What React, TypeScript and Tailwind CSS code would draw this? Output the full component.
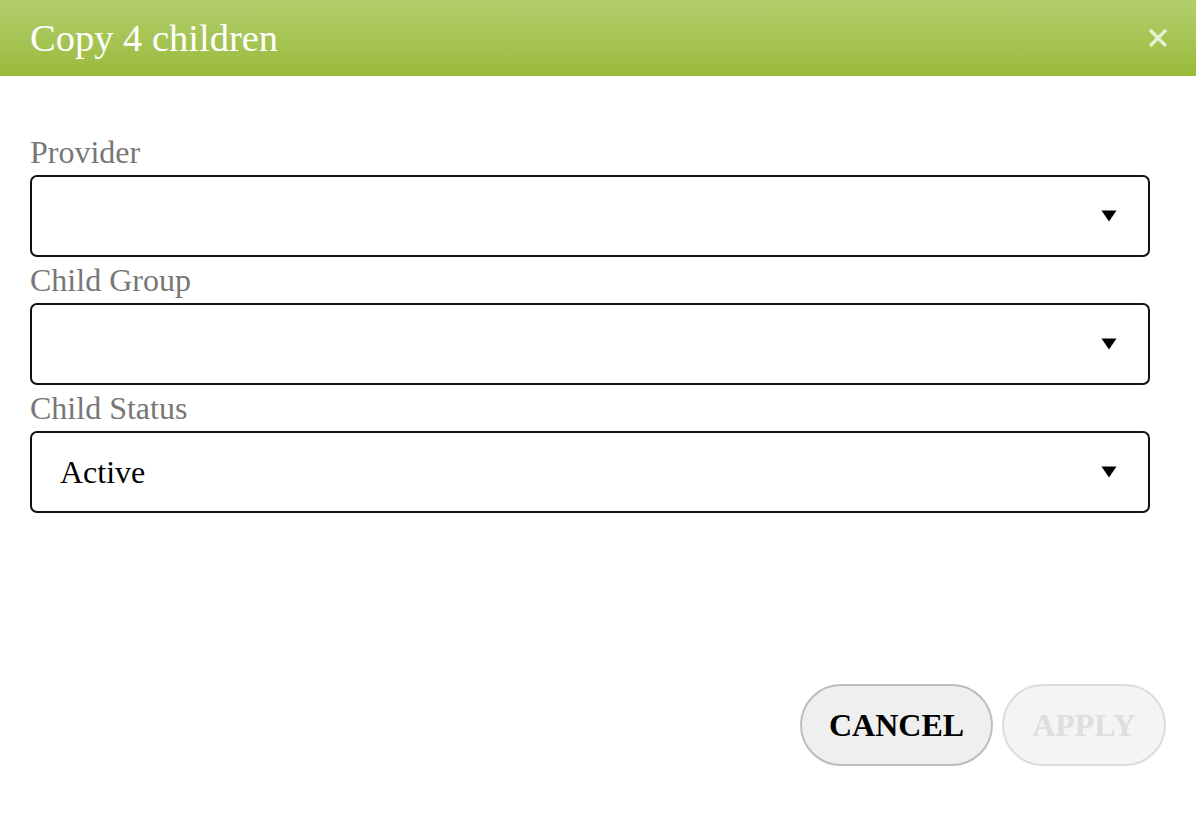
const fields = [
  { label: "Provider", value: "" },
  { label: "Child Group", value: "" },
  { label: "Child Status", value: "Active" },
];

function SelectBox({ value }: { value: string }) {
  return (
    <div className="flex h-[82px] items-center justify-between rounded-[7px] border-2 border-[#111] bg-white pl-[28px] pr-[31px]">
      <span className="text-[32px] leading-none text-black">{value}</span>
      <svg width="16" height="12" viewBox="0 0 16 12" className="shrink-0">
        <path d="M0.5 0.5 L15.5 0.5 L8 11.5 Z" fill="#000" />
      </svg>
    </div>
  );
}

export default function App() {
  return (
    <div className="flex h-[836px] w-[1196px] flex-col bg-white font-['Liberation_Serif',serif]">
      <header className="flex h-[76px] shrink-0 items-center justify-between bg-gradient-to-b from-[#b3cf6d] to-[#9aba39] pl-[30px] pr-[28px]">
        <h1 className="text-[38.5px] leading-none text-white">Copy 4 children</h1>
        <button aria-label="Close" className="flex h-[20px] w-[20px] items-center justify-center">
          <svg width="20" height="20" viewBox="0 0 20 20">
            <path d="M2 2 L18 18 M18 2 L2 18" stroke="#e9f1d3" strokeWidth="3.2" strokeLinecap="butt" />
          </svg>
        </button>
      </header>

      <div className="flex flex-1 flex-col px-[30px] pt-[53px] pb-[70px]">
        <div className="mr-[16px]">
          {fields.map((field) => (
            <div key={field.label}>
              <label className="block text-[32px] leading-[46px] text-[#777]">{field.label}</label>
              <SelectBox value={field.value} />
            </div>
          ))}
        </div>

        <div className="mt-auto flex justify-end gap-[9px]">
          <button className="h-[82px] w-[193px] rounded-full border-2 border-[#bdbdbd] bg-[#efefef] text-[32px] font-bold text-black">
            CANCEL
          </button>
          <button
            disabled
            className="h-[82px] w-[164px] rounded-full border-2 border-[#dcdcdc] bg-[#f4f4f4] text-[32px] font-bold text-[#dedede]"
          >
            APPLY
          </button>
        </div>
      </div>
    </div>
  );
}
